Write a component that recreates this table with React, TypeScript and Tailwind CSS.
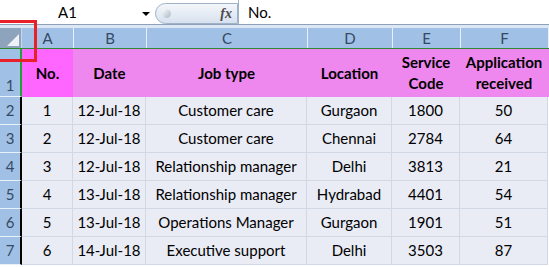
const COLS = [
  { key: "A", w: "w-[52px]" },
  { key: "B", w: "w-[73px]" },
  { key: "C", w: "w-[161px]" },
  { key: "D", w: "w-[85px]" },
  { key: "E", w: "w-[68px]" },
  { key: "F", w: "w-[88px]" },
];

const ROWS = [
  ["1", "12-Jul-18", "Customer care", "Gurgaon", "1800", "50"],
  ["2", "12-Jul-18", "Customer care", "Chennai", "2784", "64"],
  ["3", "12-Jul-18", "Relationship manager", "Delhi", "3813", "21"],
  ["4", "13-Jul-18", "Relationship manager", "Hydrabad", "4401", "54"],
  ["5", "13-Jul-18", "Operations Manager", "Gurgaon", "1901", "51"],
  ["6", "14-Jul-18", "Executive support", "Delhi", "3503", "87"],
];

function FormulaBar() {
  return (
    <div className="flex h-[25px] border-b border-[#8ea1b8] bg-white">
      <div className="relative w-[155px] flex items-center">
        <span className="ml-[58px] text-[15px] text-black">A1</span>
        <span className="absolute left-[142px] top-[12px] w-0 h-0 border-l-[4px] border-r-[4px] border-t-[4px] border-l-transparent border-r-transparent border-t-black" />
      </div>
      <div className="mt-[3px] h-[21px] w-[83px] rounded-l-full border border-[#9fb2c8] bg-gradient-to-b from-[#f4f7fb] to-[#d7e1ee] flex items-center justify-between pl-[6px] pr-[5px]">
        <span className="w-[9px] h-[9px] rounded-full bg-gradient-to-br from-[#ffffff] to-[#aab6c4]" />
        <span className="italic text-[14px] text-[#4b4b4b] font-['Liberation_Serif',serif] font-bold">fx</span>
      </div>
      <div className="flex-1 flex items-center border-l border-[#9fb2c8] pl-[9px] text-[15px] text-black">
        No.
      </div>
    </div>
  );
}

export default function App() {
  return (
    <div className="relative w-[549px] h-[267px] overflow-hidden bg-white font-['Lato',sans-serif] text-black">
      <FormulaBar />
      <div className="h-[3px] bg-[#dde7f3]" />

      {/* column headers */}
      <div className="flex h-[21px] border-b border-[#2f8a2f]">
        <div className="relative w-[22px] bg-[#8ea4bd] border-r border-[#c7d6e8]">
          <span className="absolute right-[2px] bottom-[2px] w-0 h-0 border-l-[12px] border-b-[12px] border-l-transparent border-b-[#eef2f7]" />
        </div>
        {COLS.map((c) => (
          <div key={c.key} className={`${c.w} bg-[#a0c1e5] border-r border-[#e8f0fa] flex items-center justify-center text-[15px] text-[#344a64]`}>
            {c.key}
          </div>
        ))}
      </div>

      {/* header row */}
      <div className="flex h-[48px]">
        <div className="w-[22px] bg-[#a0c1e5] border-r-[2px] border-[#22a033] border-b border-b-[#e8f0fa] flex items-end justify-center text-[15px] text-[#344a64]">
          1
        </div>
        <div className="w-[51px] bg-[#ff66ff] flex items-center justify-center font-bold text-[15px]">No.</div>
        <div className="flex-1 flex bg-[#ee88ee] font-bold text-[15px] leading-[21px] text-center">
          <div className="w-[73px] flex items-center justify-center">Date</div>
          <div className="w-[161px] flex items-center justify-center">Job type</div>
          <div className="w-[85px] flex items-center justify-center">Location</div>
          <div className="w-[68px] flex items-center justify-center">Service<br />Code</div>
          <div className="w-[88px] flex items-center justify-center">Application<br />received</div>
        </div>
      </div>

      {ROWS.map((r, i) => (
        <div key={i} className="flex h-[28px]">
          <div className="w-[22px] bg-[#a0c1e5] border-r-[2px] border-black border-b border-b-[#e8f0fa] flex items-center justify-center text-[15px] text-[#344a64]">
            {i + 2}
          </div>
          {r.map((v, j) => (
            <div key={j} className={`${j === 0 ? "w-[51px]" : COLS[j].w} bg-[#e9ebf5] border-r border-b border-[#d0d7e5] flex items-center justify-center text-[15px] whitespace-nowrap`}>
              {v}
            </div>
          ))}
        </div>
      ))}

      {/* red highlight box */}
      <div className="absolute left-[-10px] top-[20px] w-[47px] h-[42px] border-[3px] border-[#e8202a]" />
    </div>
  );
}
